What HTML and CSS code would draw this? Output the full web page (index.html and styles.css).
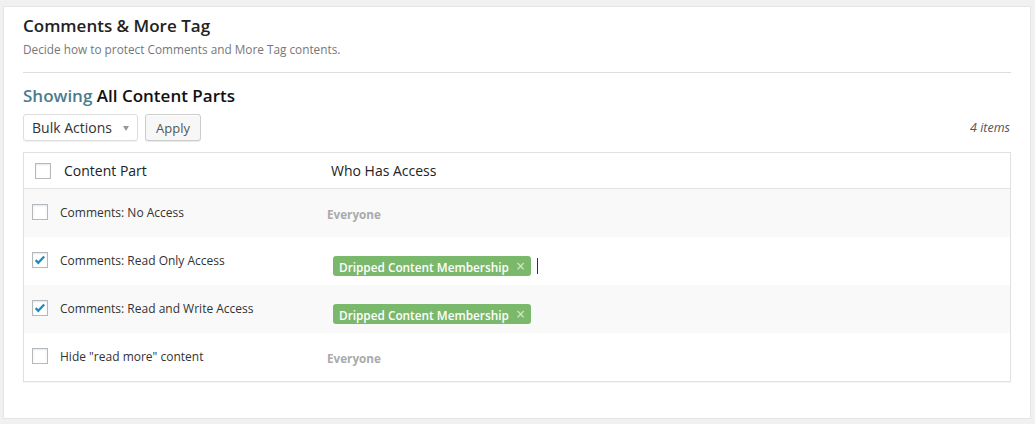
FILE: index.html
```html
<!DOCTYPE html>
<html lang="en">
<head>
  <meta charset="UTF-8">
  <title>Comments &amp; More Tag</title>
  <link rel="stylesheet" href="styles.css">
</head>
<body>
  <div class="panel">
    <h2 class="panel-title">Comments &amp; More Tag</h2>
    <p class="description">Decide how to protect Comments and More Tag contents.</p>
    <hr class="divider">

    <h3 class="showing"><span class="showing-label">Showing</span> All Content Parts</h3>

    <div class="toolbar">
      <div class="select">Bulk Actions <span class="select-arrow"></span></div>
      <button class="button">Apply</button>
      <span class="count">4 items</span>
    </div>

    <div class="list">
      <div class="list-head">
        <div class="head-cell first"><span class="check"></span>Content Part</div>
        <div class="head-cell">Who Has Access</div>
      </div>

      <div class="row alt">
        <div class="cell first"><span class="check"></span>Comments: No Access</div>
        <div class="cell access"><span class="everyone">Everyone</span></div>
      </div>

      <div class="row">
        <div class="cell first">
          <span class="check checked">
            <svg viewBox="0 0 16 16" width="14" height="14"><path d="M3 8.2l3 3 6.8-7.2" fill="none" stroke="#1e8cbe" stroke-width="2.6"/></svg>
          </span>Comments: Read Only Access
        </div>
        <div class="cell access"><span class="tag">Dripped Content Membership <span class="tag-x">&times;</span></span><span class="caret"></span></div>
      </div>

      <div class="row alt">
        <div class="cell first">
          <span class="check checked">
            <svg viewBox="0 0 16 16" width="14" height="14"><path d="M3 8.2l3 3 6.8-7.2" fill="none" stroke="#1e8cbe" stroke-width="2.6"/></svg>
          </span>Comments: Read and Write Access
        </div>
        <div class="cell access"><span class="tag">Dripped Content Membership <span class="tag-x">&times;</span></span></div>
      </div>

      <div class="row">
        <div class="cell first"><span class="check"></span>Hide "read more" content</div>
        <div class="cell access"><span class="everyone">Everyone</span></div>
      </div>
    </div>
  </div>
</body>
</html>
```

FILE: styles.css
```css
* {
  box-sizing: border-box;
}

body {
  margin: 0;
  padding: 6px 4px 0 3px;
  background: #f1f1f1;
  font-family: "Open Sans", "Noto Sans", sans-serif;
  color: #222;
}

.panel {
  height: 413px;
  background: #fff;
  border: 1px solid #e5e5e5;
  box-shadow: 0 1px 1px rgba(0, 0, 0, 0.04);
  padding: 8px 19px 0 19px;
}

.panel-title {
  margin: 0;
  font-size: 17px;
  font-weight: 600;
  line-height: 22px;
  color: #222;
}

.description {
  margin: 3px 0 0;
  font-size: 11.8px;
  line-height: 18px;
  color: #777;
}

.divider {
  margin: 14px 0 0;
  border: 0;
  border-top: 1px solid #ddd;
  height: 0;
}

.showing {
  margin: 12px 0 0;
  font-size: 17px;
  font-weight: 600;
  line-height: 22px;
  color: #111;
}

.showing-label {
  color: #4b7c8e;
}

.toolbar {
  display: flex;
  align-items: center;
  gap: 7px;
  margin-top: 7px;
}

.select {
  width: 115px;
  height: 27px;
  border: 1px solid #ddd;
  border-radius: 3px;
  box-shadow: 0 1px 1px rgba(0, 0, 0, 0.06);
  font-size: 14px;
  line-height: 25px;
  padding-left: 8px;
  position: relative;
  color: #333;
}

.select-arrow {
  position: absolute;
  right: 8px;
  top: 11px;
  border-left: 3.5px solid transparent;
  border-right: 3.5px solid transparent;
  border-top: 5px solid #999;
}

.button {
  width: 56px;
  height: 27px;
  background: #f7f7f7;
  border: 1px solid #ccc;
  border-radius: 3px;
  box-shadow: 0 1px 0 #fff inset, 0 1px 0 rgba(0, 0, 0, 0.08);
  font-family: inherit;
  font-size: 13px;
  color: #555;
  padding: 0;
}

.count {
  margin-left: auto;
  font-size: 12.5px;
  font-style: italic;
  color: #555;
  padding-right: 1px;
}

.list {
  margin-top: 11px;
  border: 1px solid #e1e1e1;
  box-shadow: 0 1px 1px rgba(0, 0, 0, 0.04);
}

.list-head {
  display: flex;
  height: 36px;
  align-items: center;
  border-bottom: 1px solid #e1e1e1;
  font-size: 14px;
  color: #222;
}

.head-cell.first {
  width: 307px;
  padding-left: 11px;
  display: flex;
  align-items: center;
}

.head-cell.first .check {
  margin-right: 13px;
}

.row {
  display: flex;
  height: 48px;
  background: #fff;
}

.row.alt {
  background: #f9f9f9;
}

.cell {
  padding-top: 15px;
  font-size: 12px;
  line-height: 18px;
  color: #333;
}

.cell.first {
  width: 303px;
  padding-left: 8px;
  display: flex;
  align-items: flex-start;
}

.cell.first .check {
  margin: 0 12px 0 0;
}

.check {
  display: inline-flex;
  align-items: center;
  justify-content: center;
  width: 16px;
  height: 16px;
  flex: none;
  background: #fff;
  border: 1px solid #b4b9be;
  box-shadow: inset 0 1px 2px rgba(0, 0, 0, 0.1);
}

.access {
  display: flex;
  align-items: flex-start;
  padding-top: 16px;
}

.everyone {
  font-size: 11.7px;
  font-weight: 700;
  color: #aaa;
  line-height: 18px;
}

.tag {
  display: inline-block;
  margin: 3px 0 0 6px;
  height: 20px;
  line-height: 20px;
  padding: 0 6px;
  border-radius: 3px;
  background: #7ab86b;
  color: #fff;
  font-size: 11.8px;
  font-weight: 600;
}

.tag-x {
  margin-left: 4px;
  color: #d6ebd0;
  font-weight: 400;
  font-size: 16px;
}

.caret {
  display: inline-block;
  width: 1px;
  height: 16px;
  margin: 5px 0 0 6px;
  background: #333;
}
```
